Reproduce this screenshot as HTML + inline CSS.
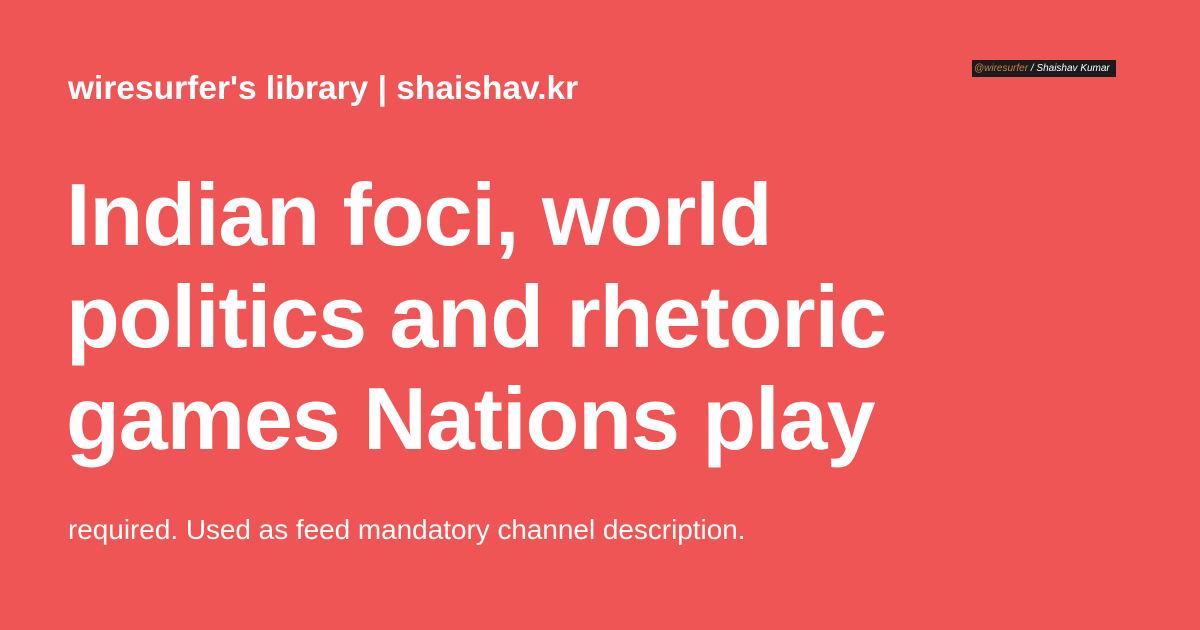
<!DOCTYPE html>
<html><head><style>
body{margin:0;width:1200px;height:630px;background:#EF5555;font-family:"Liberation Sans",sans-serif;color:#fff;position:relative;overflow:hidden}
.h{position:absolute;left:68px;top:70px;font-size:33.5px;font-weight:bold;white-space:nowrap}
.t{position:absolute;left:66px;top:164px;font-size:88px;font-weight:bold;line-height:102px;letter-spacing:-1px;white-space:nowrap}
.d{position:absolute;left:68px;top:514px;font-size:27.9px;white-space:nowrap}
.b{position:absolute;left:972px;top:60px;width:144px;height:17px;background:#1b1b1b;font-size:10px;font-style:italic;line-height:17px;white-space:nowrap}
.b span{color:#d08040;margin-left:2px}
</style></head><body>
<div class="h">wiresurfer's library | shaishav.kr</div>
<div class="b"><span>@wiresurfer</span> / Shaishav Kumar</div>
<div class="t">Indian foci, world<br>politics and rhetoric<br>games Nations play</div>
<div class="d">required. Used as feed mandatory channel description.</div>
</body></html>
